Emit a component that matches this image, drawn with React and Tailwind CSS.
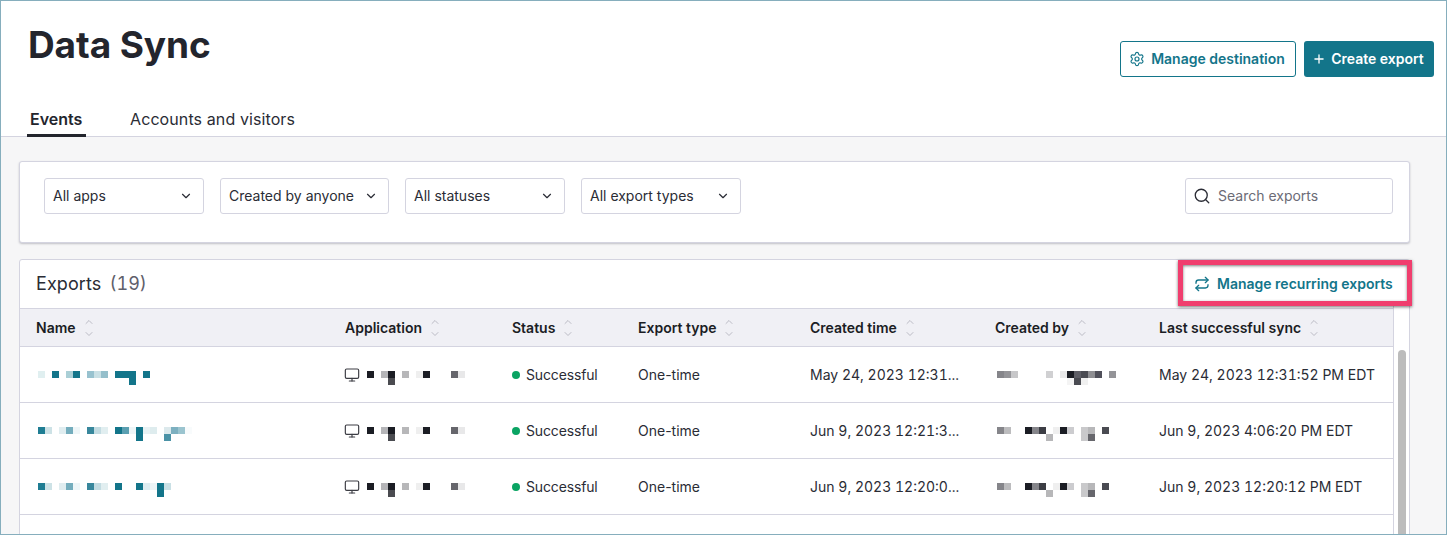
import { ChevronDown, ChevronUp, Monitor, Plus, Repeat, Search, Settings } from "lucide-react";

const T = "#13758a";
const D = "#1b1d24";

const rows = [
  {
    name: [[0, 0, "#e0eff0"], [2, 0, T], [4, 0, "#aacfd6"], [5, 0, T], [7, 0, "#98c2cf"], [8, 0, "#c9e0e5"], [9, 0, "#95bfcb"], [11, 0, T], [12, 0, T], [13, 0, T], [13, 1, T], [15, 0, T]],
    created: "May 24, 2023 12:31...",
    by: [[0, 0, "#85858a"], [1, 0, "#949498"], [2, 0, "#c7c7c9"], [7, 0, "#d0d0d2"], [9, 0, "#e8e8e9"], [10, 0, D], [11, 0, "#5e5e66"], [12, 0, "#4a4b52"], [13, 0, "#8e8e92"], [14, 0, "#50505a"], [16, 0, "#949498"], [10, 1, "#f4f4f4"], [11, 1, "#4a4b52"], [12, 1, "#f0f0f0"]],
    last: "May 24, 2023 12:31:52 PM EDT",
  },
  {
    name: [[0, 0, "#1f7d93"], [1, 0, "#cde2e6"], [3, 0, "#e0edf0"], [4, 0, "#74adbd"], [5, 0, "#eef6f8"], [7, 0, "#38879c"], [8, 0, "#c3dce2"], [9, 0, "#e1eef0"], [11, 0, T], [12, 0, "#5a9fb1"], [13, 0, "#eef5f7"], [14, 0, T], [15, 0, "#e8f2f4"], [16, 0, "#deecee"], [18, 0, "#dce9ec"], [19, 0, "#7db0c0"], [20, 0, "#9bc4cf"], [21, 0, "#f8fbfc"], [14, 1, T], [18, 1, "#4a92a6"]],
    created: "Jun 9, 2023 12:21:3...",
    by: [[0, 0, "#85858a"], [1, 0, "#bcbcbe"], [4, 0, D], [5, 0, "#85858a"], [6, 0, "#3c3d44"], [8, 0, "#efefef"], [9, 0, D], [10, 0, "#cccccf"], [12, 0, "#c9c9cb"], [13, 0, "#b7b7b9"], [15, 0, "#4a4b52"], [7, 1, "#b7b7b9"], [12, 1, "#c9c9cb"], [13, 1, "#66666c"]],
    last: "Jun 9, 2023 4:06:20 PM EDT",
  },
  {
    name: [[0, 0, "#1f7d93"], [1, 0, "#cde2e6"], [3, 0, "#e0edf0"], [4, 0, "#74adbd"], [5, 0, "#eef6f8"], [7, 0, "#38879c"], [8, 0, "#c3dce2"], [9, 0, "#e1eef0"], [11, 0, T], [14, 0, T], [15, 0, "#deecf0"], [16, 0, "#ecf4f6"], [17, 0, T], [18, 0, "#c9e0e5"], [17, 1, T]],
    created: "Jun 9, 2023 12:20:0...",
    by: [[0, 0, "#85858a"], [1, 0, "#bcbcbe"], [4, 0, D], [5, 0, "#85858a"], [6, 0, "#3c3d44"], [8, 0, "#efefef"], [9, 0, D], [10, 0, "#cccccf"], [12, 0, "#c9c9cb"], [13, 0, "#b7b7b9"], [15, 0, "#4a4b52"], [7, 1, "#b7b7b9"], [12, 1, "#c9c9cb"], [13, 1, "#66666c"]],
    last: "Jun 9, 2023 12:20:12 PM EDT",
  },
];

const appPixels = [[0, 0, D], [2, 0, "#b5b5b8"], [3, 0, D], [3, 1, "#4a4b50"], [5, 0, "#b7b7b9"], [7, 0, "#efefef"], [8, 0, D], [12, 0, "#66666c"], [13, 0, "#e8e8e9"]];

const cols = ["Name", "Application", "Status", "Export type", "Created time", "Created by", "Last successful sync"];
const gridCols = "grid grid-cols-[309px_167px_126px_172px_185px_164px_250px]";

// blurred out values in the screenshot, 7px mosaic blocks
const Mosaic = ({ cells }) => {
  const w = (Math.max(...cells.map((c) => c[0])) + 1) * 7;
  return (
    <svg width={w} height="14" viewBox={`0 0 ${w} 14`} shapeRendering="crispEdges" className="block">
      {cells.map(([x, y, c], i) => (
        <rect key={i} x={x * 7} y={y * 7} width="7" height="7" fill={c} />
      ))}
    </svg>
  );
};

const Select = ({ label, width }) => (
  <div className={`${width} h-9 flex items-center justify-between pl-2 pr-[10px] bg-white border border-[#d4d4e0] rounded-[3px] text-sm text-[#2a2c35]`}>
    <span>{label}</span>
    <ChevronDown size={14} strokeWidth={2} className="text-[#2a2c35]" />
  </div>
);

const SortIcon = () => (
  <span className="flex flex-col ml-[7px] text-[#a9a9b4]">
    <ChevronUp size={12} strokeWidth={1.5} />
    <ChevronDown size={12} strokeWidth={1.5} />
  </span>
);

const App = () => {
  return (
    <div className="relative h-[535px] overflow-hidden border border-[#86aebd] bg-[#f6f6f7] font-['Inter',sans-serif] text-[#2a2c35]">
      <div className="h-[136px] bg-white border-b border-[#d4d4e0]">
        <div className="flex justify-between pl-[27px] pr-3 pt-[19px]">
          <h1 className="text-[37px] leading-[50px] font-bold tracking-[-0.1px] text-[#23252d]">Data Sync</h1>
          <div className="flex gap-2 pt-[21px]">
            <button className="w-[176px] h-9 flex items-center justify-center gap-[6px] pr-[2px] bg-white border border-[#13758a] rounded-[3px] text-sm font-semibold text-[#13758a]">
              <Settings size={16} strokeWidth={1.75} />
              Manage destination
            </button>
            <button className="w-[130px] h-9 flex items-center justify-center gap-[5px] pr-[2px] bg-[#13758a] rounded-[3px] text-sm font-semibold text-white">
              <Plus size={14} strokeWidth={2.25} />
              Create export
            </button>
          </div>
        </div>
        <div className="flex gap-[44px] pl-[26px] mt-[30px] h-[30px]">
          <div className="w-[59px] h-[30px] px-[3px] border-b-[3px] border-[#23252d] text-base leading-[24px] font-semibold text-[#23252d]">Events</div>
          <div className="text-base leading-[24px] tracking-[0.1px] text-[#2a2c35]">Accounts and visitors</div>
        </div>
      </div>

      <div className="pl-[18px] pr-[36px] pt-6">
        <div className="h-[82px] flex justify-between pl-6 pr-4 pt-4 bg-white border border-[#d4d4e0] rounded-[3px] shadow-[0_1px_2px_rgba(40,40,60,0.25)]">
          <div className="flex gap-4">
            <Select label="All apps" width="w-[160px]" />
            <Select label="Created by anyone" width="w-[169px]" />
            <Select label="All statuses" width="w-[160px]" />
            <Select label="All export types" width="w-[160px]" />
          </div>
          <div className="w-[208px] h-9 flex items-center gap-[7px] pl-[7px] bg-white border border-[#d4d4e0] rounded-[3px] text-sm text-[#6b6b76]">
            <Search size={18} strokeWidth={1.75} className="text-[#2a2c35]" />
            Search exports
          </div>
        </div>

        <div className="mt-4 bg-white border border-[#d4d4e0] rounded-[3px] h-[300px] flex">
          <div className="w-[1373px]">
            <div className="h-12 flex items-center pl-4 text-lg">
              <span className="text-[#2a2c35] tracking-[0.1px]">Exports</span>
              <span className="ml-2 text-[#5f606b] tabular-nums">(19)</span>
            </div>
            <div className={`${gridCols} h-[39px] items-center bg-[#f0f0f5] border-y border-[#d4d4e0] text-sm font-semibold text-[#1b1d24]`}>
              {cols.map((c) => (
                <div key={c} className="pl-4 flex items-center">
                  {c}
                  <SortIcon />
                </div>
              ))}
            </div>
            {rows.map((r, i) => (
              <div key={i} className={`${gridCols} h-14 items-center border-b border-[#d4d4e0] text-sm text-[#2a2c35]`}>
                <div className="pl-[18px] pt-[7px]"><Mosaic cells={r.name} /></div>
                <div className="pl-4 flex items-center">
                  <Monitor size={16} strokeWidth={1.75} className="text-[#3c3d44] -ml-[1px] shrink-0" />
                  <span className="ml-[7px] pt-[7px]"><Mosaic cells={appPixels} /></span>
                </div>
                <div className="pl-4 flex items-center">
                  <span className="w-2 h-2 rounded-full bg-[#0aa463] mr-[6px]" />
                  <span className="tracking-[-0.15px]">Successful</span>
                </div>
                <div className="pl-4">One-time</div>
                <div className="pl-4 tabular-nums">{r.created}</div>
                <div className="pl-[18px] pt-[7px]"><Mosaic cells={r.by} /></div>
                <div className="pl-4 whitespace-nowrap tabular-nums">{r.last}</div>
              </div>
            ))}
          </div>
          <div className="w-[17px] border-l border-[#d4d4e0] pl-[4px] pt-[42px]">
            <div className="w-2 h-[300px] rounded-full bg-[#bcbcbc] mt-[48px]" />
          </div>
        </div>
      </div>

      <div className="absolute left-[1177px] top-[259px] w-[234px] h-[46px] flex items-center pt-[1px] pl-[11px] gap-[7px] bg-white border-[5px] border-[#f03e6e] shadow-[0_1px_3px_rgba(0,0,0,0.55),inset_0_1px_3px_rgba(0,0,0,0.5)] text-sm font-semibold text-[#13758a]">
        <Repeat size={16} strokeWidth={2} />
        Manage recurring exports
      </div>
    </div>
  );
};

export default App;
